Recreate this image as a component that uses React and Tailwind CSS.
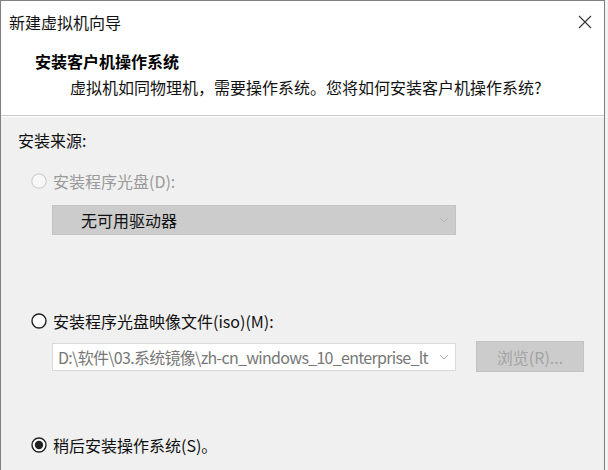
import React from "react";

const FONT = { fontFamily: '"Noto Sans CJK SC", "Noto Sans", "Liberation Sans", sans-serif' };

function Radio({ state }) {
  if (state === "disabled") {
    return (
      <svg width="16" height="16" viewBox="0 0 16 16" className="shrink-0">
        <circle cx="8" cy="8" r="7.2" fill="#f7f7f7" stroke="#cfcfcf" strokeWidth="1.2" />
      </svg>
    );
  }
  return (
    <svg width="16" height="16" viewBox="0 0 16 16" className="shrink-0">
      <circle cx="8" cy="8" r="7" fill="#ffffff" stroke="#222" strokeWidth="1.4" />
      {state === "checked" && <circle cx="8" cy="8" r="4.2" fill="#222" />}
    </svg>
  );
}

function Chevron({ color }) {
  return (
    <svg width="10" height="6" viewBox="0 0 10 6">
      <path d="M1 1 L5 5 L9 1" fill="none" stroke={color} strokeWidth="1" />
    </svg>
  );
}

export default function App() {
  return (
    <div className="w-[608px] h-[470px] bg-[#f3f3f3] overflow-hidden text-[16px]" style={FONT}>
      <div className="w-[605px] h-[470px] border-l border-r border-t border-[#808080] bg-[#f0f0f0] flex flex-col">
        {/* header */}
        <div className="bg-white h-[115px] border-b border-[#c9c9c9] flex flex-col">
          <div className="h-[41px] flex items-center justify-between pl-[8px] pr-[12px]">
            <span className="leading-[22px] text-[#111]">新建虚拟机向导</span>
            <svg width="14" height="14" viewBox="0 0 14 14">
              <path d="M1 1 L13 13 M13 1 L1 13" stroke="#333" strokeWidth="1.1" />
            </svg>
          </div>
          <div className="mt-[8px] pl-[34px] leading-[22px] font-bold text-black">安装客户机操作系统</div>
          <div className="mt-[4px] pl-[69px] leading-[22px] text-[#111]">
            虚拟机如同物理机，需要操作系统。您将如何安装客户机操作系统?
          </div>
        </div>
        <div className="h-px bg-white" />
        {/* body */}
        <div className="flex flex-col pl-[17px]">
          <div className="mt-[12px] leading-[22px] text-[#111]">安装来源:</div>

          <div className="mt-[19px] ml-[13px] flex items-center gap-[6px] h-[22px]">
            <Radio state="disabled" />
            <span className="leading-[22px] text-[#9a9a9a]">安装程序光盘(D):</span>
          </div>

          <div className="mt-[13px] ml-[34px] w-[404px] h-[30px] bg-[#cccccc] border border-[#c4c4c4] flex items-center justify-between pl-[28px] pr-[6px]">
            <span className="leading-[22px] text-[#111]">无可用驱动器</span>
            <Chevron color="#b4b4b4" />
          </div>

          <div className="mt-[75px] ml-[13px] flex items-center gap-[6px] h-[22px]">
            <Radio state="unchecked" />
            <span className="leading-[22px] text-[#111]">安装程序光盘映像文件(iso)(M):</span>
          </div>

          <div className="mt-[9px] ml-[34px] flex items-center h-[31px]">
            <div className="w-[404px] h-[28px] bg-white border border-[#d9d9d9] flex items-center pl-[5px] pr-[6px]">
              <span className="flex-1 overflow-hidden whitespace-nowrap leading-[22px] text-[#777] tracking-[-0.7px]">
                D:\软件\03.系统镜像\zh-cn_windows_10_enterprise_lt
              </span>
              <span className="ml-[4px] flex items-center">
                <Chevron color="#a8a8a8" />
              </span>
            </div>
            <div className="ml-[20px] w-[108px] h-[31px] bg-[#cccccc] border border-[#c2c2c2] flex items-center justify-center">
              <span className="leading-[22px] text-[#a3a3a3]">浏览(R)...</span>
            </div>
          </div>

          <div className="mt-[62px] ml-[13px] flex items-center gap-[6px] h-[22px]">
            <Radio state="checked" />
            <span className="leading-[22px] text-[#111]">稍后安装操作系统(S)。</span>
          </div>
        </div>
      </div>
    </div>
  );
}
